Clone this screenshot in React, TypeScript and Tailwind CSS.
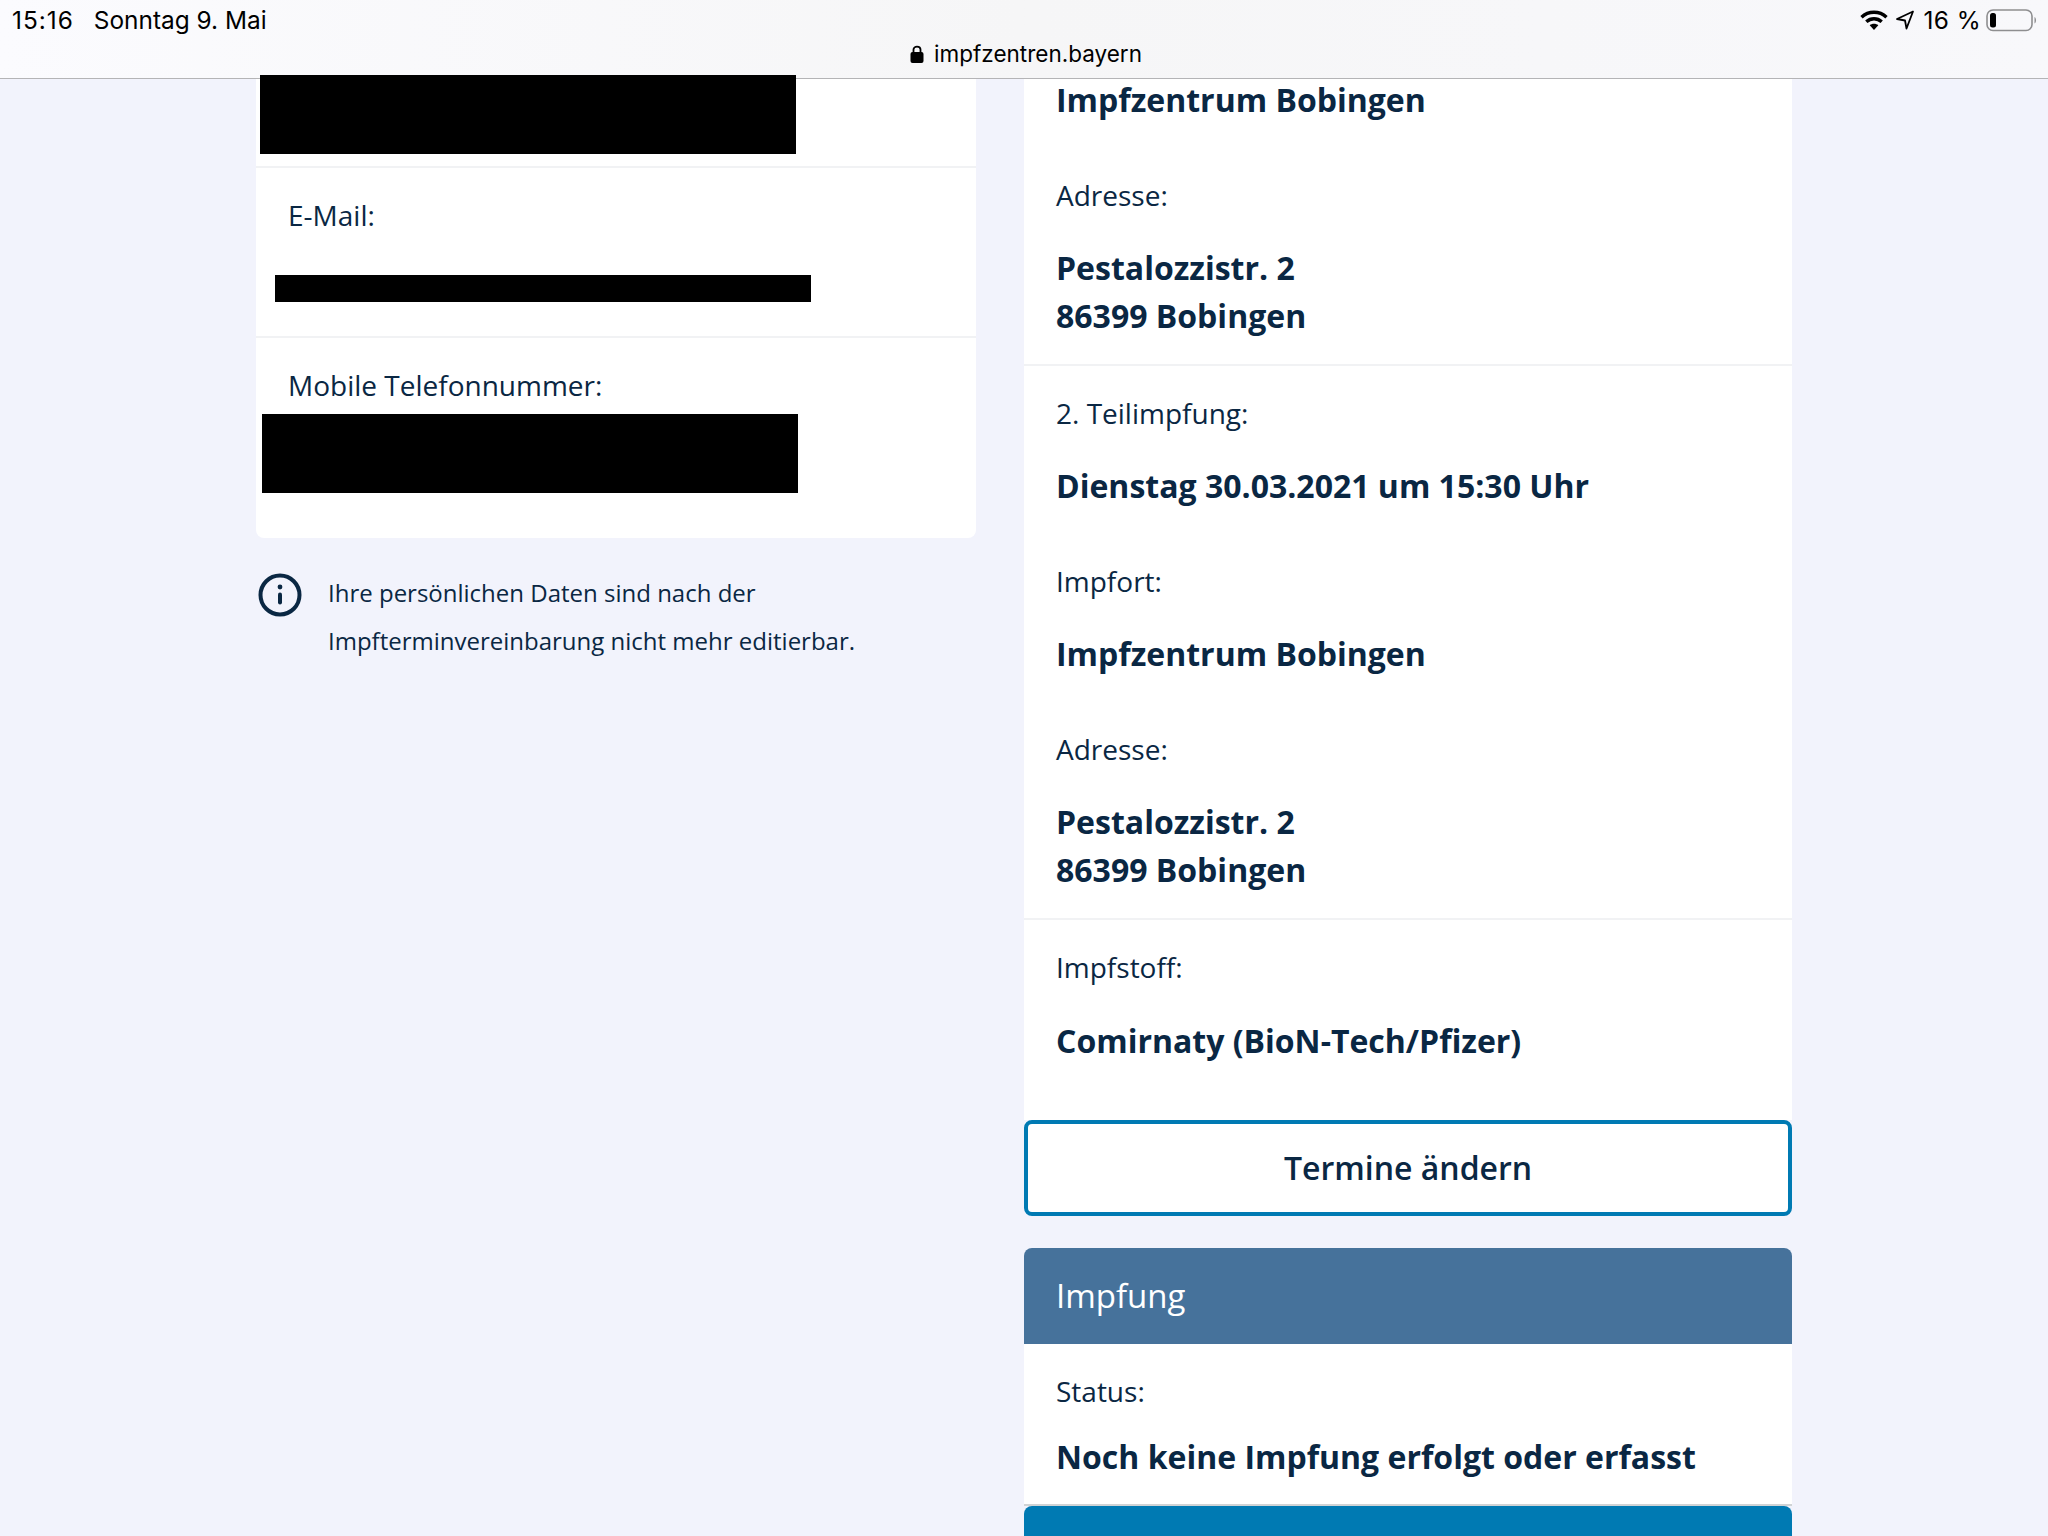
import React from "react";

const Label = ({ children, className = "" }: { children: React.ReactNode; className?: string }) => (
  <div className={`h-12 text-[28px] leading-[48px] text-[#0a2743] ${className}`}>{children}</div>
);
const Value = ({ children, className = "" }: { children: React.ReactNode; className?: string }) => (
  <div className={`h-12 text-[32px] font-bold leading-[48px] text-[#0a2743] ${className}`}>{children}</div>
);
const Divider = () => <div className="h-[2px] bg-[#f1f2f4]" />;

function Address() {
  return (
    <>
      <Label className="mb-[25px] mt-[47px]">Adresse:</Label>
      <Value>Pestalozzistr. 2</Value>
      <Value>86399 Bobingen</Value>
    </>
  );
}

function TopBar() {
  return (
    <header className="flex h-[79px] flex-col border-b border-[#b4b4b6] bg-gradient-to-r from-[#fbfbfe] via-[#f6f6f7] to-[#f8f8fb] font-['Inter',sans-serif] text-black">
      <div className="flex h-[40px] items-center justify-between pl-3 pr-[10px] text-[24.4px]">
        <div className="flex gap-[20px]">
          <span className="tracking-[1px]">15:16</span>
          <span>Sonntag 9. Mai</span>
        </div>
        <div className="flex items-center gap-[5px]">
          <svg width="28" height="22" viewBox="0 0 28 22" aria-hidden="true">
            <path d="M1.5 8.2 C8.5 1.6 19.5 1.6 26.5 8.2" fill="none" stroke="#000" strokeWidth="3.4" />
            <path d="M6.3 12.7 C10.8 8.7 17.2 8.7 21.7 12.7" fill="none" stroke="#000" strokeWidth="3.4" />
            <path d="M14 21 L9.7 16.3 C12 14.3 16 14.3 18.3 16.3 Z" fill="#000" />
          </svg>
          <svg className="ml-[2px]" width="20" height="22" viewBox="0 0 20 22" aria-hidden="true">
            <path d="M18 2.5 L2 10 L10 11.5 L11.5 19.5 Z" fill="none" stroke="#000" strokeWidth="1.8" strokeLinejoin="round" />
          </svg>
          <span className="ml-[4px] tracking-[0.4px]">16 %</span>
          <svg width="52" height="24" viewBox="0 0 52 24" aria-hidden="true">
            <rect x="1" y="2" width="45" height="20.5" rx="6" fill="none" stroke="#8e8e90" strokeWidth="1.6" />
            <rect x="4" y="5" width="6" height="14.5" rx="2.5" fill="#000" />
            <path d="M48.5 9 C50.5 10 50.5 14.5 48.5 15.5 Z" fill="#8e8e90" />
          </svg>
        </div>
      </div>
      <div className="-mt-[3px] flex items-center justify-center gap-[10px] pl-[4px] text-[22.5px]">
        <svg width="14" height="18" viewBox="0 0 14 18" aria-hidden="true">
          <rect x="0.5" y="7" width="13" height="11" rx="2" fill="#000" />
          <path d="M3.5 8 V4.6 C3.5 0.6 10.5 0.6 10.5 4.6 V8" fill="none" stroke="#000" strokeWidth="1.8" />
        </svg>
        <span>impfzentren.bayern</span>
      </div>
    </header>
  );
}

function LeftColumn() {
  return (
    <div className="w-[720px] font-['Open_Sans',sans-serif]">
      <div className="flow-root rounded-b-lg bg-white pb-[45px]">
        <div className="-mt-[4px] ml-1 h-[79px] w-[536px] bg-black" />
        <div className="h-3" />
        <Divider />
        <div className="h-[168px] pt-[23px]">
          <Label className="pl-[32px]">E-Mail:</Label>
          <div className="ml-[19px] mt-[36px] h-[27px] w-[536px] bg-black" />
        </div>
        <Divider />
        <div className="pt-[23px]">
          <Label className="pl-[32px]">Mobile Telefonnummer:</Label>
          <div className="ml-[6px] mt-[5px] h-[79px] w-[536px] bg-black" />
        </div>
      </div>
      <div className="mt-[31px] flex">
        <svg className="ml-[2px] mt-[4px] shrink-0" width="44" height="44" viewBox="0 0 44 44" aria-hidden="true">
          <circle cx="22" cy="22" r="19.5" fill="none" stroke="#0a2743" strokeWidth="4" />
          <circle cx="22" cy="14" r="2.4" fill="#0a2743" />
          <rect x="20" y="19.5" width="4" height="12" rx="2" fill="#0a2743" />
        </svg>
        <p className="ml-[26px] text-[24px] leading-[48px] text-[#0a2743]">
          Ihre persönlichen Daten sind nach der
          <br />
          Impfterminvereinbarung nicht mehr editierbar.
        </p>
      </div>
    </div>
  );
}

function RightColumn() {
  return (
    <div className="w-[768px] font-['Open_Sans',sans-serif]">
      <div className="flow-root bg-white">
        <div className="-mt-[3px] px-8 pb-6">
          <Value>Impfzentrum Bobingen</Value>
          <Address />
        </div>
        <Divider />
        <div className="px-8 pb-6 pt-[23px]">
          <Label className="mb-[25px]">2. Teilimpfung:</Label>
          <Value>Dienstag 30.03.2021 um 15:30 Uhr</Value>
          <Label className="mb-[25px] mt-[47px]">Impfort:</Label>
          <Value>Impfzentrum Bobingen</Value>
          <Address />
        </div>
        <Divider />
        <div className="px-8 pb-[55px] pt-[23px]">
          <Label className="mb-[26px]">Impfstoff:</Label>
          <Value>Comirnaty (BioN-Tech/Pfizer)</Value>
        </div>
      </div>
      <button className="flex h-[96px] w-full items-center justify-center rounded-lg border-4 border-[#007ab3] bg-white text-[32px] font-semibold text-[#0a2743]">
        Termine ändern
      </button>
      <div className="mt-8 flex h-[96px] items-center rounded-t-lg bg-[#46729b] px-8 text-[33px] font-medium text-white">Impfung</div>
      <div className="h-[162px] border-b-2 border-[#d0d3d5] bg-white px-8 pt-[23px]">
        <Label className="mb-[18px]">Status:</Label>
        <Value>Noch keine Impfung erfolgt oder erfasst</Value>
      </div>
      <div className="h-[30px] rounded-t-lg bg-[#007ab3]" />
    </div>
  );
}

export default function App() {
  return (
    <div className="h-[1536px] w-[2048px] overflow-hidden bg-[#f2f3fc]">
      <TopBar />
      <main className="flex justify-center gap-12">
        <LeftColumn />
        <RightColumn />
      </main>
    </div>
  );
}
